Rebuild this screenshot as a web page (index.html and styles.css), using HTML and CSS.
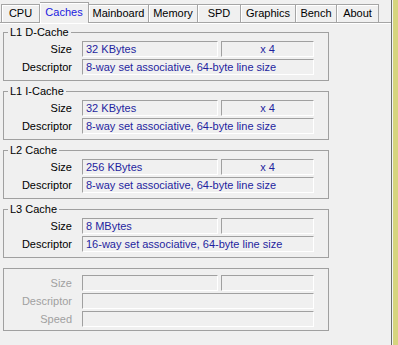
FILE: index.html
```html
<!DOCTYPE html>
<html lang="en">
<head>
    <meta charset="UTF-8">
    <title>CPU-Z Caches</title>
    <link rel="stylesheet" href="styles.css">
</head>
<body>
    <div class="window">
        <div class="main">
            <div class="tabs">
                <div class="tab tab-cpu">CPU</div>
                <div class="tab tab-caches active">Caches</div>
                <div class="tab tab-mainboard">Mainboard</div>
                <div class="tab tab-memory">Memory</div>
                <div class="tab tab-spd">SPD</div>
                <div class="tab tab-graphics">Graphics</div>
                <div class="tab tab-bench">Bench</div>
                <div class="tab tab-about">About</div>
            </div>
            <div class="panel">
                <fieldset class="group">
                    <legend>L1 D-Cache</legend>
                    <div class="row">
                        <span class="label">Size</span>
                        <span class="field size">32 KBytes</span>
                        <span class="field count">x 4</span>
                    </div>
                    <div class="row">
                        <span class="label">Descriptor</span>
                        <span class="field wide">8-way set associative, 64-byte line size</span>
                    </div>
                </fieldset>
                <fieldset class="group">
                    <legend>L1 I-Cache</legend>
                    <div class="row">
                        <span class="label">Size</span>
                        <span class="field size">32 KBytes</span>
                        <span class="field count">x 4</span>
                    </div>
                    <div class="row">
                        <span class="label">Descriptor</span>
                        <span class="field wide">8-way set associative, 64-byte line size</span>
                    </div>
                </fieldset>
                <fieldset class="group">
                    <legend>L2 Cache</legend>
                    <div class="row">
                        <span class="label">Size</span>
                        <span class="field size">256 KBytes</span>
                        <span class="field count">x 4</span>
                    </div>
                    <div class="row">
                        <span class="label">Descriptor</span>
                        <span class="field wide">8-way set associative, 64-byte line size</span>
                    </div>
                </fieldset>
                <fieldset class="group">
                    <legend>L3 Cache</legend>
                    <div class="row">
                        <span class="label">Size</span>
                        <span class="field size">8 MBytes</span>
                        <span class="field count"></span>
                    </div>
                    <div class="row">
                        <span class="label">Descriptor</span>
                        <span class="field wide">16-way set associative, 64-byte line size</span>
                    </div>
                </fieldset>
                <fieldset class="group blank">
                    <div class="row">
                        <span class="label">Size</span>
                        <span class="field size"></span>
                        <span class="field count"></span>
                    </div>
                    <div class="row">
                        <span class="label">Descriptor</span>
                        <span class="field wide"></span>
                    </div>
                    <div class="row">
                        <span class="label">Speed</span>
                        <span class="field wide"></span>
                    </div>
                </fieldset>
            </div>
        </div>
        <div class="frame"></div>
    </div>
</body>
</html>
```

FILE: styles.css
```css
body {
    margin: 0;
    background-color: #f0f0f0;
    font-family: "Liberation Sans", Arial, sans-serif;
    font-size: 11px;
    line-height: 13px;
    color: #000;
}
.window {
    display: flex;
    height: 345px;
    overflow: hidden;
}
.main {
    width: 391px;
}
.frame {
    width: 6px;
    border-left: 1px solid #6d6d6d;
    background: linear-gradient(to right, #f4f4f4 1px, #d6d47e 1px);
}
.tabs {
    display: flex;
    align-items: flex-end;
    height: 22px;
    padding-left: 1px;
}
.tab {
    box-sizing: border-box;
    height: 18px;
    line-height: 17px;
    text-align: center;
    border-top: 1px solid #a5a5a5;
    border-right: 1px solid #a5a5a5;
    box-shadow: inset 1px 1px #fff;
}
.tab:first-child {
    border-left: 1px solid #a5a5a5;
}
.tab.active {
    position: relative;
    z-index: 1;
    height: 21px;
    margin-bottom: -1px;
    line-height: 18px;
    color: #1a1ae0;
    background-color: #f0f0f0;
}
.tab-cpu { width: 39px; }
.tab-caches { width: 49px; }
.tab-mainboard { width: 60px; }
.tab-memory { width: 49px; }
.tab-spd { width: 43px; }
.tab-graphics { width: 55px; }
.tab-bench { width: 41px; }
.tab-about { width: 42px; }
.panel {
    display: flex;
    flex-direction: column;
    gap: 4px;
    padding: 3px 0 0 3px;
    border-top: 1px solid #a5a5a5;
    box-shadow: inset 0 1px #fff;
}
.group {
    box-sizing: border-box;
    width: 326px;
    margin: 0;
    padding: 2px 0 5px 0;
    border: 1px solid #a0a0a0;
    display: flex;
    flex-direction: column;
    gap: 2px;
}
.group legend {
    margin-left: 4px;
    padding: 0 2px;
    line-height: 13px;
}
.group.blank {
    margin-top: 6px;
    padding: 6px 0 3px 0;
}
.row {
    display: flex;
}
.label {
    width: 68px;
    margin-right: 10px;
    text-align: right;
    line-height: 16px;
}
.blank .label {
    color: #a0a0a0;
}
.field {
    box-sizing: border-box;
    height: 16px;
    padding-left: 3px;
    line-height: 14px;
    color: #1f1f9f;
    white-space: nowrap;
    border-top: 1px solid #a0a0a0;
    border-left: 1px solid #a0a0a0;
    border-bottom: 1px solid #fff;
    border-right: 1px solid #fff;
}
.field.size {
    width: 136px;
}
.field.count {
    width: 93px;
    margin-left: 3px;
    padding-left: 0;
    text-align: center;
}
.field.wide {
    width: 232px;
}
```
